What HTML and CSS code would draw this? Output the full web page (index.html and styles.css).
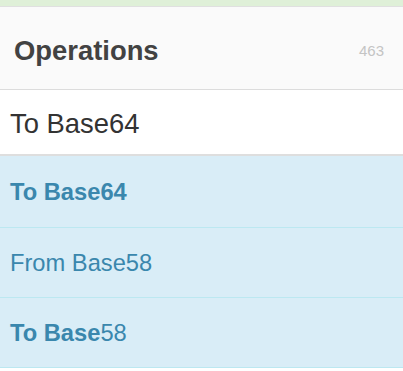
FILE: index.html
```html
<!DOCTYPE html>
<html>
<head>
<meta charset="utf-8">
<link rel="stylesheet" href="styles.css">
</head>
<body>
<div class="topbar"></div>
<div class="header">
  <span class="title">Operations</span>
  <span class="count">463</span>
</div>
<div class="search">To Base64</div>
<ul class="ops">
  <li class="op"><b>To Base64</b></li>
  <li class="op">From Base58</li>
  <li class="op"><b>To Base</b>58</li>
</ul>
</body>
</html>
```
FILE: styles.css
```css
html, body {
  margin: 0;
  padding: 0;
  background: #fff;
  font-family: "Liberation Sans", Arial, sans-serif;
}
.topbar {
  height: 6px;
  background: #dff0d8;
  border-bottom: 1px solid #e0e0e0;
}
.header {
  box-sizing: border-box;
  height: 83px;
  background: #fafafa;
  border-bottom: 1px solid #dcdcdc;
  display: flex;
  align-items: center;
  justify-content: space-between;
  padding: 5px 19px 0 14px;
}
.title {
  font-size: 27.4px;
  font-weight: bold;
  color: #424242;
}
.count {
  font-size: 15px;
  color: #c4c4c4;
}
.search {
  box-sizing: border-box;
  height: 66px;
  border-bottom: 2px solid #dedede;
  display: flex;
  align-items: center;
  padding: 3px 0 0 10px;
  font-size: 27.4px;
  color: #333;
}
.ops {
  list-style: none;
  margin: 0;
  padding: 0;
  background: #d9edf7;
}
.op {
  box-sizing: border-box;
  height: 70px;
  border-bottom: 1px solid #bce8f1;
  display: flex;
  align-items: center;
  padding: 2px 0 0 10px;
  font-size: 23.7px;
  color: #3a87ad;
}
.op:first-child {
  height: 72px;
}
```
